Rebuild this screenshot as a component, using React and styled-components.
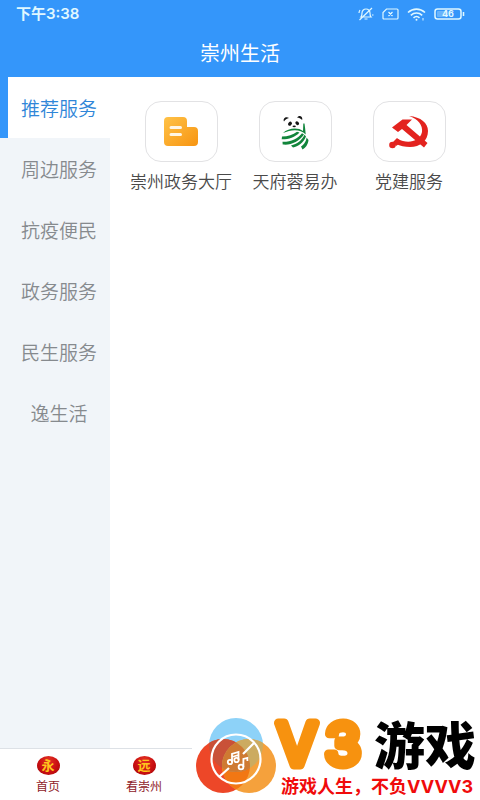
import React, { useState } from "react";
import styled, { createGlobalStyle } from "styled-components";

const GlobalStyle = createGlobalStyle`
  * { box-sizing: border-box; }
  body {
    margin: 0;
    background: #fff;
    font-family: "Noto Sans CJK SC", sans-serif;
  }
  button { font: inherit; border: 0; padding: 0; background: none; cursor: pointer; }
`;

const Page = styled.div`
  position: relative;
  display: flex;
  flex-direction: column;
  min-height: 100vh;
  overflow: hidden;
`;

const Header = styled.header`
  background: #3496fa;
  color: #fff;
`;

const StatusBar = styled.div`
  display: flex;
  align-items: center;
  justify-content: space-between;
  height: 28px;
  padding: 0 15px 0 16px;
  color: #e0f8ff;
`;

const Clock = styled.time`
  font: 600 15px/28px Inter, "Noto Sans CJK SC", sans-serif;
`;

const StatusIcons = styled.div`
  display: flex;
  align-items: center;
  gap: 8px;
`;

const Title = styled.h1`
  margin: 0;
  height: 49px;
  font-size: 20px;
  font-weight: 400;
  line-height: 50px;
  text-align: center;
`;

const Body = styled.div`
  display: flex;
  flex: 1;
`;

const Sidebar = styled.nav`
  display: flex;
  flex-direction: column;
  flex: 0 0 110px;
  background: #f1f5f9;
`;

const Category = styled.button`
  height: 61px;
  border-left: 8px solid ${(p) => (p.$active ? "#3496fa" : "transparent")};
  background: ${(p) => (p.$active ? "#fff" : "transparent")};
  color: ${(p) => (p.$active ? "#2f86d8" : "#868a8e")};
  font-size: 19px;
  font-weight: 350;
  line-height: 60px;
  white-space: nowrap;
`;

const Services = styled.main`
  display: grid;
  flex: 1;
  grid-template-columns: repeat(3, 1fr);
  align-content: start;
  padding: 24px 14px;
`;

const Service = styled.button`
  display: flex;
  flex-direction: column;
  align-items: center;
  gap: 7px;
  color: #4a4a4a;
  font-size: 17px;
  font-weight: 350;
  line-height: 24px;
  white-space: nowrap;
`;

const Tile = styled.span`
  display: flex;
  align-items: center;
  justify-content: center;
  width: 73px;
  height: 61px;
  border: 1px solid #e2e2e4;
  border-radius: 16px;
`;

const TabBar = styled.nav`
  display: grid;
  grid-template-columns: repeat(5, 1fr);
  height: 52px;
  border-top: 1px solid #dde1e6;
  background: #fff;
`;

const Tab = styled.button`
  display: flex;
  flex-direction: column;
  align-items: center;
  justify-content: center;
  gap: 3px;
  color: #8f1a28;
  font-size: 12px;
  line-height: 16px;
`;

const Medal = styled.span`
  width: 23px;
  height: 19px;
  border-radius: 50%;
  background: radial-gradient(ellipse at 50% 25%, #e33224, #c80d10 60%, #980c0c);
  color: #ffc71c;
  font-size: 13px;
  font-weight: 700;
  line-height: 18px;
  text-align: center;
`;

const Brand = styled.aside`
  position: absolute;
  right: 0;
  bottom: 0;
  display: flex;
  width: 288px;
  height: 88px;
  background: #fff;
`;

const BrandWords = styled.div`
  flex: 1;
  margin-left: -10px;
`;

const BrandName = styled.div`
  display: flex;
  align-items: center;
  gap: 4px;
  height: 62px;
  color: #000;
  font-size: 51px;
  font-weight: 900;
  line-height: 62px;
  white-space: nowrap;
`;

const Wordmark = styled.svg`
  flex: none;
  overflow: visible;
`;

const Slogan = styled.p`
  margin: 0;
  padding-left: 13px;
  color: #f00b0b;
  font: 700 18px/26px Inter, "Noto Sans CJK SC", sans-serif;
  white-space: nowrap;
`;

const MutedBell = () => (
  <svg width="16" height="14" viewBox="0 0 16 14" fill="none" stroke="currentColor" strokeWidth="1.2" aria-label="静音">
    <path d="M3 10h10c-1-1-1-2-1-4 0-2-1.500-4-4-4S4 4 4 6c0 2 0 3-1 4zM6.500 12h3M1.500 13 14 1M1 6c0-1 .3-2 1-3M14 8h1.500" />
  </svg>
);

const NoSim = () => (
  <svg width="17" height="12" viewBox="0 0 17 12" fill="none" stroke="currentColor" strokeWidth="1.2" aria-label="无卡">
    <path d="M4.500 1H15q1 0 1 1v8q0 1-1 1H2q-1 0-1-1V4.500zM6.500 4l4 4M10.500 4l-4 4" />
  </svg>
);

const Wifi = () => (
  <svg width="19" height="13" viewBox="0 0 19 13" fill="none" stroke="currentColor" strokeWidth="1.600" aria-label="无线网络">
    <path d="M1 4.500C6 0 13 0 18 4.500M3.800 7.300c3.300-3 8.100-3 11.400 0M6.500 9.800c1.800-1.600 4.200-1.600 6 0" />
    <circle cx="9.500" cy="11.800" r="1" fill="currentColor" stroke="none" />
    <path d="M16 10v2.500" strokeWidth="1" />
  </svg>
);

const Battery = () => (
  <svg width="31" height="12" viewBox="0 0 31 12" aria-label="电量">
    <rect x="1" y="1" width="26" height="10" rx="2.500" fill="none" stroke="currentColor" strokeWidth="1.500" />
    <rect x="3" y="3" width="11" height="6" rx="1" fill="#68b4fc" />
    <path d="M29.500 4v4" stroke="currentColor" strokeWidth="1.500" />
    <text x="14" y="9" textAnchor="middle" fill="currentColor" fontFamily="Inter, sans-serif" fontSize="9" fontWeight="700">46</text>
  </svg>
);

const HallIcon = () => (
  <svg width="34" height="30" viewBox="0 0 34 30" aria-hidden="true">
    <defs>
      <linearGradient id="hall" x1="0" y1="0" x2="1" y2="1">
        <stop offset="0" stopColor="#ffc247" />
        <stop offset="1" stopColor="#f79411" />
      </linearGradient>
    </defs>
    <path d="M4 0h15q4 0 4 4v6h7q4 0 4 4v11q0 4-4 4H4q-4 0-4-4V4q0-4 4-4z" fill="url(#hall)" />
    <path d="M7 10.500h9.500M7 17.500h9.500" stroke="#fff6e5" strokeWidth="3" strokeLinecap="round" />
  </svg>
);

const PandaIcon = () => (
  <svg width="28" height="36" viewBox="0 0 28 36" fill="none" aria-hidden="true">
    <g fill="#151515">
      <path d="M3 7.500C1.500 4.500 5 2 8 4 6 4.700 4 5.700 3 7.500zM16 3.500c2-3 6-1.500 5.200 2.500C19.500 4.500 18 3.800 16 3.500z" />
      <ellipse cx="9" cy="9.700" rx="2.200" ry="1.700" transform="rotate(-45 9 9.700)" />
      <ellipse cx="16.200" cy="9.200" rx="2.100" ry="1.600" transform="rotate(45 16.200 9.200)" />
      <ellipse cx="13.200" cy="12.300" rx="1.700" ry=".9" />
    </g>
    <g fill="#11853b">
      <path d="M2 19C7 14 17 13 22 17L22.300 9.500 23.500 9.500C24 13 24.500 17 24.700 20.500 19 14.500 10 15.500 2 19z" />
      <path d="M1 22.500C7 22.500 12 20.500 16 17.700L18.500 18.500C14 23.500 7 25.500.7 25.300z" />
      <path d="M1.500 27.800C10 28 17 24.500 21 19.200L23 20.500C18 27.500 10 31.500 1.700 30.500z" />
      <path d="M10 31.500C16 30 21 26.500 23.500 20.800L25 22.500C22.500 29 17 32.500 12 33.500z" />
      <path d="M20 32.500C23 30.500 25.500 27 25.500 23.500L27.500 26C27 30.500 24.500 34 21.500 35.500z" />
    </g>
  </svg>
);

const PartyIcon = () => (
  <svg width="42" height="34" viewBox="0 0 42 34" fill="#e3231f" aria-hidden="true">
    <path d="M21 1C33 2 40 8 40 16C40 26 32 32 22 32C17 32 12 31 8 29L10 24C19 29 32 27 34 17C35 10 30 4 21 1z" />
    <circle cx="4.500" cy="30" r="3.300" />
    <path d="M5 27L9 23L14 27L8 31z" />
    <path d="M4 12.500L14.500 4.500H24L18.500 10L39.500 28L36 32.500L14 14L10 17z" />
  </svg>
);

const BrandMark = () => (
  <svg width="86" height="88" viewBox="0 0 86 88" aria-hidden="true">
    <circle cx="44" cy="33" r="27" fill="#8dd2f8" />
    <circle cx="31" cy="54" r="27" fill="#ed4728" />
    <circle cx="57" cy="54" r="27" fill="#f5a13c" />
    <clipPath id="leftDisc"><circle cx="31" cy="54" r="27" /></clipPath>
    <clipPath id="rightDisc"><circle cx="57" cy="54" r="27" /></clipPath>
    <circle cx="57" cy="54" r="27" fill="#f27713" clipPath="url(#leftDisc)" />
    <circle cx="44" cy="33" r="27" fill="#c95138" clipPath="url(#leftDisc)" />
    <circle cx="44" cy="33" r="27" fill="#ccab60" clipPath="url(#rightDisc)" />
    <g clipPath="url(#leftDisc)">
      <circle cx="44" cy="33" r="27" fill="#cf7a32" clipPath="url(#rightDisc)" />
    </g>
    <g fill="none" stroke="#fff" strokeWidth="2.200">
      <circle cx="44" cy="47" r="24.500" />
      <path d="M27 65l10-9M51 42l11-11" />
      <g strokeWidth="1.800">
        <circle cx="38" cy="50" r="2.200" /><circle cx="44.500" cy="48" r="2.200" />
        <path d="M40 50v-8l6.500-2v8M40 45l6.500-2" />
        <circle cx="49" cy="55" r="2.400" />
        <path d="M51.400 55v-8l4-1v3" />
      </g>
    </g>
  </svg>
);

const VThree = () => (
  <Wordmark width="102" height="62" viewBox="0 0 102 62">
    <g fill="#f7920f" stroke="#f7920f" strokeWidth="9" strokeLinejoin="round" fontFamily="Inter, sans-serif" fontSize="58" fontWeight="400" textAnchor="middle">
      <text x="29" y="53">V</text>
      <text x="75" y="53">3</text>
    </g>
  </Wordmark>
);

const categories = ["推荐服务", "周边服务", "抗疫便民", "政务服务", "民生服务", "逸生活"];
const services = [
  { name: "崇州政务大厅", Icon: HallIcon },
  { name: "天府蓉易办", Icon: PandaIcon },
  { name: "党建服务", Icon: PartyIcon },
];
const tabs = [
  { name: "首页", mark: "永" },
  { name: "看崇州", mark: "远" },
];

export default function App() {
  const [active, setActive] = useState(categories[0]);
  return (
    <Page>
      <GlobalStyle />
      <Header>
        <StatusBar>
          <Clock>下午3:38</Clock>
          <StatusIcons><MutedBell /><NoSim /><Wifi /><Battery /></StatusIcons>
        </StatusBar>
        <Title>崇州生活</Title>
      </Header>
      <Body>
        <Sidebar>
          {categories.map((name) => (
            <Category key={name} $active={name === active} onClick={() => setActive(name)}>{name}</Category>
          ))}
        </Sidebar>
        <Services>
          {services.map(({ name, Icon }) => (
            <Service key={name}><Tile><Icon /></Tile>{name}</Service>
          ))}
        </Services>
      </Body>
      <TabBar>
        {tabs.map(({ name, mark }) => (
          <Tab key={name}><Medal>{mark}</Medal>{name}</Tab>
        ))}
      </TabBar>
      <Brand>
        <BrandMark />
        <BrandWords>
          <BrandName><VThree />游戏</BrandName>
          <Slogan>游戏人生，不负VVVV3</Slogan>
        </BrandWords>
      </Brand>
    </Page>
  );
}
